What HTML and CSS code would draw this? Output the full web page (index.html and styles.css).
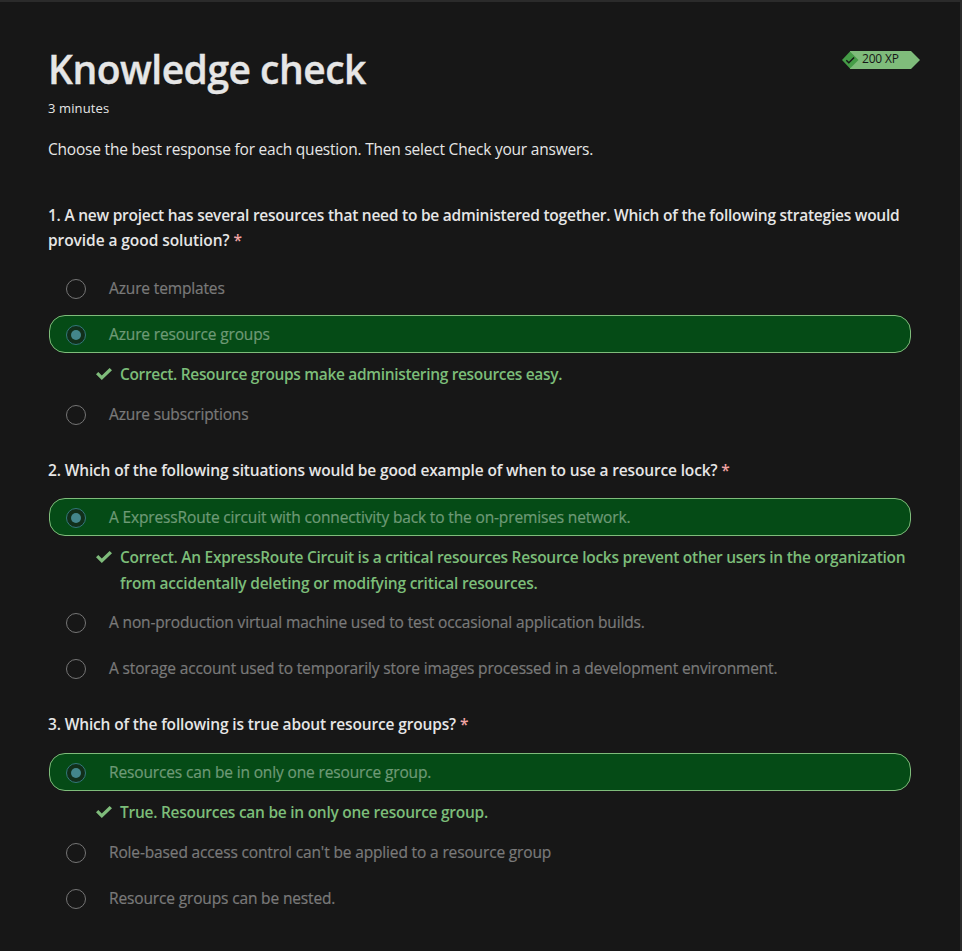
FILE: index.html
```html
<!DOCTYPE html>
<html lang="en">
<head>
<meta charset="utf-8">
<title>Knowledge check</title>
<link rel="stylesheet" href="styles.css">
</head>
<body>
<svg width="0" height="0" class="defs" aria-hidden="true">
  <symbol id="check" viewBox="0 0 16 12"><path d="M0 6.3 2.3 4 5.8 7.5 13.6 0 16 2.3 5.8 12z"/></symbol>
</svg>
<main class="unit">
  <header class="head">
    <h1 class="title">Knowledge check</h1>
    <div class="xp">
      <svg class="xp-shape" width="78" height="18" viewBox="0 0 78 18"><path fill="#7fbc7b" d="M8 0h61l9 9-9 9H8z"/><path fill="#459c47" d="M0 9 8 .5 16.500 9 8 17.500z"/><path fill="none" stroke="#171717" stroke-width="1.4" d="m4.300 9.200 2.500 2.500 5.300-5.300"/></svg>
      <span class="xp-label">200 XP</span>
    </div>
  </header>
  <p class="time">3 minutes</p>
  <p class="intro">Choose the best response for each question. Then select Check your answers.</p>

  <section class="quiz">
    <h2 class="question q1">1. A new project has several resources that need to be administered together. Which of the following strategies would<br><span class="wrap-q">provide a good solution? <span class="req">*</span></span></h2>
    <div class="option"><i class="radio"></i><span>Azure templates</span></div>
    <div class="option correct"><i class="radio"></i><span>Azure resource groups</span></div>
    <div class="feedback short"><svg class="tick"><use href="#check"/></svg><p>Correct. Resource groups make administering resources easy.</p></div>
    <div class="option"><i class="radio"></i><span>Azure subscriptions</span></div>
  </section>

  <section class="quiz">
    <h2 class="question q2">2. Which of the following situations would be good example of when to use a resource lock? <span class="req">*</span></h2>
    <div class="option correct"><i class="radio"></i><span>A ExpressRoute circuit with connectivity back to the on-premises network.</span></div>
    <div class="feedback long"><svg class="tick"><use href="#check"/></svg><p>Correct. An ExpressRoute Circuit is a critical resources Resource locks prevent other users in the organization<br><span class="wrap">from accidentally deleting or modifying critical resources.</span></p></div>
    <div class="option"><i class="radio"></i><span>A non-production virtual machine used to test occasional application builds.</span></div>
    <div class="option"><i class="radio"></i><span>A storage account used to temporarily store images processed in a development environment.</span></div>
  </section>

  <section class="quiz">
    <h2 class="question q3">3. Which of the following is true about resource groups? <span class="req">*</span></h2>
    <div class="option correct"><i class="radio"></i><span>Resources can be in only one resource group.</span></div>
    <div class="feedback"><svg class="tick"><use href="#check"/></svg><p>True. Resources can be in only one resource group.</p></div>
    <div class="option"><i class="radio"></i><span>Role-based access control can't be applied to a resource group</span></div>
    <div class="option"><i class="radio"></i><span>Resource groups can be nested.</span></div>
  </section>
</main>
</body>
</html>
```
FILE: styles.css
```css
* { box-sizing: border-box; }
html, body { height: 100%; margin: 0; }
body {
  background: #171717;
  color: #e6e6e6;
  font: 15.5px/25px "Open Sans", "Noto Sans", sans-serif;
  white-space: nowrap;
  overflow: hidden;
}
h1, h2, p { margin: 0; }
.defs { display: block; height: 0; }
.unit {
  height: 951px;
  padding: 41px 40px 0 48px;
  border-top: 2px solid #2b2b2b;
  border-right: 2px solid #2b2b2b;
}
.head { display: flex; justify-content: space-between; height: 55px; }
.title { font-size: 39px; line-height: 52px; font-weight: 600; letter-spacing: -0.5px; -webkit-text-stroke: 0.4px; }
.xp { display: grid; width: 78px; height: 18px; margin-top: 8px; }
.xp-shape, .xp-label { grid-area: 1 / 1; }
.xp-label { padding-left: 20px; font-size: 12px; line-height: 16px; color: #171717; letter-spacing: -0.2px; }
.time { font-size: 13px; line-height: 20px; letter-spacing: 0.12px; }
.intro { margin-top: 19px; letter-spacing: -0.21px; }
.question { font-size: 15.5px; line-height: 25px; font-weight: 600; letter-spacing: -0.15px; }
.q1 { margin: 41px 0 16px; letter-spacing: -0.24px; }
.q2 { margin: 25px 0 15px; }
.q3 { margin: 25px 0 16px; }
.wrap-q { letter-spacing: -0.07px; }
.req { color: #f1a3a3; }
.option {
  display: flex;
  height: 38px;
  width: 862px;
  margin: 0 0 8px 1px;
  padding: 9px 16px 7px;
  border: 1px solid transparent;
  border-radius: 16px;
  color: #7a7a7a;
  letter-spacing: -0.145px;
  -webkit-text-stroke: 0.2px;
}
.option:last-child { margin-bottom: 0; }
.option span { line-height: 20px; margin-top: -1px; }
.option.correct { background: #054b16; border-color: #7fbc7b; color: #6e9a76; margin-bottom: 0; }
.radio {
  display: grid;
  place-items: center;
  width: 20px;
  height: 20px;
  margin-right: 23px;
  border: 1px solid #757575;
  border-radius: 50%;
}
.correct .radio { background: #112f1a; border-color: #34777b; }
.correct .radio::after { content: ""; width: 10px; height: 10px; border-radius: 50%; background: #43868b; }
.feedback {
  display: flex;
  padding: 8px 0 8px 48px;
  line-height: 26px;
  font-weight: 600;
  color: #7cbd79;
  letter-spacing: -0.26px;
}
.feedback.short { letter-spacing: -0.33px; }
.feedback.long { padding-bottom: 7px; letter-spacing: -0.27px; }
.wrap { letter-spacing: -0.2px; }
.tick { width: 16px; height: 12px; margin: 7px 8px 0 0; fill: #7fbc7b; }
```
